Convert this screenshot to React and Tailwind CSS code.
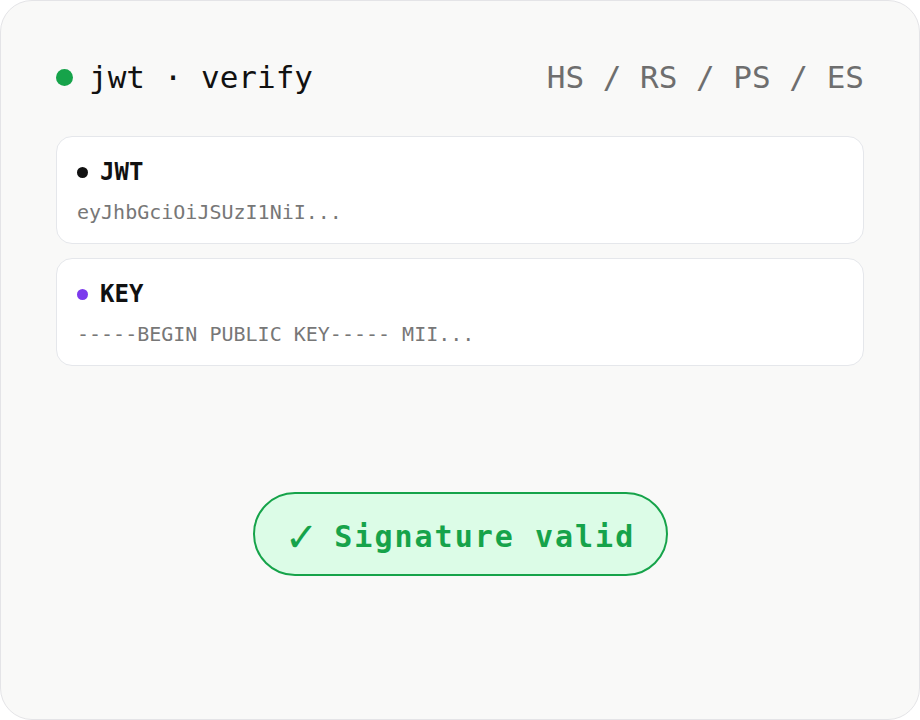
export default function App() {
  const mono = { fontFamily: '"DejaVu Sans Mono", "Liberation Mono", monospace' };
  return (
    <div className="w-[920px] h-[720px] bg-white" style={mono}>
      <div className="w-[920px] h-[720px] rounded-[32px] border border-[#e4e4e7] bg-[#f9f9f8] px-[55px] pt-[55px] flex flex-col">
        <div className="flex items-center justify-between h-[42px]">
          <div className="flex items-center">
            <span className="w-[17px] h-[17px] rounded-full bg-[#16a34a] mr-[16px]" />
            <span className="text-[31px] leading-[42px] text-[#111]">jwt · verify</span>
          </div>
          <span className="text-[31px] leading-[42px] text-[#6e6e6e]">HS / RS / PS / ES</span>
        </div>

        <div className="mt-[38px] flex flex-col gap-[14px]">
          <div className="bg-white border border-[#e5e7eb] rounded-[16px] pl-5 pt-5 pb-[17px]">
            <div className="flex items-center h-[30px]">
              <span className="w-[11px] h-[11px] rounded-full bg-[#111] mr-[12px]" />
              <span className="text-[24px] leading-[30px] font-bold text-[#111]">JWT</span>
            </div>
            <div className="mt-[11px] text-[20px] leading-[28px] text-[#777]">eyJhbGciOiJSUzI1NiI...</div>
          </div>
          <div className="bg-white border border-[#e5e7eb] rounded-[16px] pl-5 pt-5 pb-[17px]">
            <div className="flex items-center h-[30px]">
              <span className="w-[11px] h-[11px] rounded-full bg-[#7c3aed] mr-[12px]" />
              <span className="text-[24px] leading-[30px] font-bold text-[#111]">KEY</span>
            </div>
            <div className="mt-[11px] text-[20px] leading-[28px] text-[#777]">-----BEGIN PUBLIC KEY----- MII...</div>
          </div>
        </div>

        <div className="mt-[126px] flex justify-center">
          <div className="w-[415px] h-[84px] rounded-full border-2 border-[#16a34a] bg-[#dcfce7] flex items-center justify-center pt-[5px] text-[30px] font-bold text-[#16a34a] tracking-[2px]">
            <span className="text-[40px] leading-none font-normal mr-[14px]" style={{ fontFamily: '"DejaVu Sans", sans-serif' }}>✓</span>
            <span>Signature valid</span>
          </div>
        </div>
      </div>
    </div>
  );
}
